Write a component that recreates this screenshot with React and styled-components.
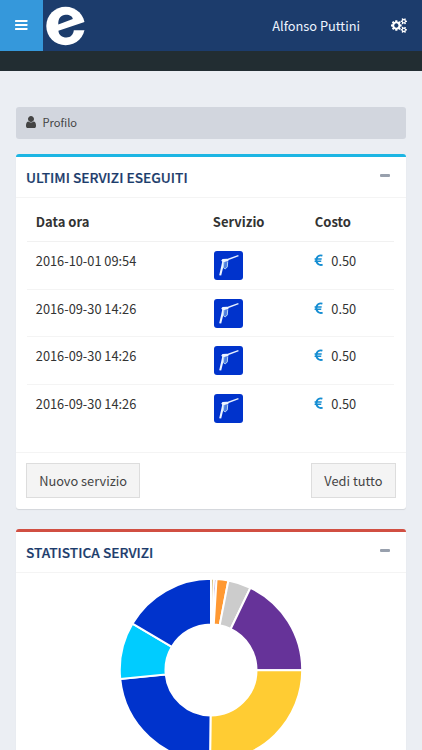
import React from "react";
import styled, { createGlobalStyle } from "styled-components";

const GlobalStyle = createGlobalStyle`
  * {
    box-sizing: border-box;
  }

  body {
    margin: 0;
    background: #ebeef3;
    color: #333;
    font-family: "Noto Sans CJK SC", "Open Sans", sans-serif;
    font-size: 12.8px;
    line-height: 20px;
    overflow: hidden;
  }
`;

const Page = styled.div`
  height: 750px;
  overflow: hidden;
`;

const Navbar = styled.header`
  display: flex;
  align-items: center;
  height: 51px;
  background: #1c3c6c;
  color: #fff;
`;

const MenuButton = styled.button`
  display: flex;
  align-items: center;
  justify-content: center;
  width: 43px;
  height: 51px;
  padding: 0 0 2px;
  border: 0;
  background: #3598db;
`;

const Logo = styled.svg`
  width: 40px;
  height: 40px;
  margin: 0 auto 0 3px;
`;

const UserName = styled.span`
  margin-right: 31px;
  color: #edf4ff;
`;

const SettingsIcon = styled.svg`
  width: 16px;
  height: 15px;
  margin-right: 15px;
`;

const DarkStrip = styled.div`
  height: 20px;
  background: #222d32;
`;

const Content = styled.main`
  display: flex;
  flex-direction: column;
  padding: 36px 15.6px 0;
`;

const Breadcrumb = styled.div`
  display: flex;
  align-items: center;
  gap: 5px;
  height: 31.6px;
  margin-bottom: 15px;
  padding: 0 0 2px 8px;
  border-radius: 3px;
  background: #d2d6de;
  color: #444;
  font-size: 11.1px;
`;

const Box = styled.section`
  height: ${(props) => props.$height}px;
  margin-bottom: 20px;
  border-top: 3px solid ${(props) => props.$accent};
  border-radius: 3px;
  background: #fff;
  box-shadow: 0 1px 1px rgba(0, 0, 0, 0.1);
`;

const BoxHeader = styled.div`
  display: flex;
  align-items: center;
  justify-content: space-between;
  height: 41px;
  padding: 0 16.4px 0 10.3px;
  border-bottom: 1px solid #f4f4f4;
`;

const BoxTitle = styled.h3`
  margin: 0;
  color: #1c3c6c;
  font-size: 13.7px;
  font-weight: 500;
  -webkit-text-stroke: 0.2px #1c3c6c;
`;

const Collapse = styled.span`
  width: 10px;
  height: 3px;
  margin-bottom: 3px;
  border-radius: 1px;
  background: #98a0ad;
`;

const BoxBody = styled.div`
  height: 254.8px;
  padding: 5px 12.5px 0 11px;
`;

const Table = styled.table`
  width: 100%;
  border-collapse: collapse;
  table-layout: fixed;
`;

const HeadCell = styled.th`
  width: ${(props) => props.$width};
  height: 39px;
  padding: 1px 9.2px 0;
  border-bottom: 1px solid #f1f1f1;
  font-size: 13px;
  font-weight: 700;
  text-align: left;
`;

const Cell = styled.td`
  height: 47.5px;
  padding: 9px 9.2px 0;
  vertical-align: top;
`;

const Row = styled.tr`
  & + & ${Cell} {
    border-top: 1px solid #f4f4f4;
  }
`;

const Price = styled.span`
  display: flex;
  align-items: center;
  gap: 4px;
  margin-left: -1.5px;
`;

const ServiceIcon = styled.svg`
  display: block;
  width: 29px;
  height: 29px;
  margin: 0 0 0 1px;
`;

const BoxFooter = styled.div`
  display: flex;
  justify-content: space-between;
  padding: 10px 10.5px;
  border-top: 1px solid #f4f4f4;
`;

const Button = styled.button`
  height: 35px;
  width: ${(props) => props.$width}px;
  padding: 0;
  border: 1px solid #ddd;
  background: #f4f4f4;
  color: #444;
  font: inherit;
`;

const ChartArea = styled.div`
  display: flex;
  justify-content: center;
  padding-top: 5.5px;
`;

const services = [
  { date: "2016-10-01 09:54", cost: "0.50" },
  { date: "2016-09-30 14:26", cost: "0.50" },
  { date: "2016-09-30 14:26", cost: "0.50" },
  { date: "2016-09-30 14:26", cost: "0.50" },
];

// start and end angle in degrees, clockwise from the top
const slices = [
  { from: 0, to: 1.9, color: "#d8c07c" },
  { from: 1.9, to: 3.5, color: "#7a3fa0" },
  { from: 3.5, to: 11, color: "#ff9933" },
  { from: 11, to: 25.6, color: "#cccccc" },
  { from: 25.6, to: 90.2, color: "#663399" },
  { from: 90.2, to: 180.6, color: "#ffcc33" },
  { from: 180.6, to: 264.4, color: "#0033cc" },
  { from: 264.4, to: 300.6, color: "#00ccff" },
  { from: 300.6, to: 360, color: "#0033cc" },
];

function slicePath(from, to) {
  const outer = 91.2;
  const inner = 45.5;
  const point = (r, deg) => {
    const a = (deg * Math.PI) / 180;
    return `${92 + r * Math.sin(a)} ${92 - r * Math.cos(a)}`;
  };
  return `M${point(outer, from)}A${outer} ${outer} 0 0 1 ${point(outer, to)}L${point(inner, to)}A${inner} ${inner} 0 0 0 ${point(inner, from)}Z`;
}

function Donut() {
  return (
    <svg width="184" height="184" viewBox="0 0 184 184">
      {slices.map((s) => (
        <path key={s.from} d={slicePath(s.from, s.to)} fill={s.color} stroke="#fff" strokeWidth="2" />
      ))}
    </svg>
  );
}

function BarsIcon() {
  return (
    <svg width="13" height="12" viewBox="0 0 13 12" fill="#fff">
      <rect y="1" width="12.5" height="2" rx="0.4" />
      <rect y="5" width="12.5" height="2" rx="0.4" />
      <rect y="9" width="12.5" height="2" rx="0.4" />
    </svg>
  );
}

function CogsIcon() {
  return (
    <SettingsIcon viewBox="0 0 1920 1792" fill="#fff">
      <path d="M896 896q0-106-75-181t-181-75-181 75-75 181 75 181 181 75 181-75 75-181zm768 512q0-52-38-90t-90-38-90 38-38 90q0 53 37.5 90.5t90.5 37.5 90.5-37.5 37.5-90.5zm0-1024q0-52-38-90t-90-38-90 38-38 90q0 53 37.5 90.5t90.5 37.5 90.5-37.5 37.5-90.5zm-384 421v185q0 10-7 19.5t-16 10.5l-155 24q-11 35-32 76 34 48 90 115 7 11 7 20 0 12-7 19-23 30-82.5 89.5t-78.5 59.5q-11 0-21-7l-115-90q-37 19-77 31-11 108-23 155-7 24-30 24h-186q-11 0-20-7.5t-10-17.5l-23-153q-34-10-75-31l-118 89q-7 7-20 7-11 0-21-8-144-133-144-160 0-9 7-19 10-14 41-53t47-61q-23-44-35-82l-152-24q-10-1-17-9.5t-7-19.5v-185q0-10 7-19.5t16-10.5l155-24q11-35 32-76-34-48-90-115-7-11-7-20 0-12 7-20 22-30 82-89t79-59q11 0 21 7l115 90q34-18 77-32 11-108 23-154 7-24 30-24h186q11 0 20 7.5t10 17.5l23 153q34 10 75 31l118-89q8-7 20-7 11 0 21 8 144 133 144 160 0 8-7 19-12 16-42 54t-45 60q23 48 34 82l152 23q10 2 17 10.5t7 19.5zm640 533v140q0 16-149 31-12 27-30 52 51 113 51 138 0 4-4 7-122 71-124 71-8 0-46-47t-52-68q-20 2-30 2t-30-2q-14 21-52 68t-46 47q-2 0-124-71-4-3-4-7 0-25 51-138-18-25-30-52-149-15-149-31v-140q0-16 149-31 13-29 30-52-51-113-51-138 0-4 4-7 4-2 35-20t59-34 30-16q8 0 46 46.5t52 67.5q20-2 30-2t30 2q51-71 92-112l6-2q4 0 124 70 4 3 4 7 0 25-51 138 17 23 30 52 149 15 149 31zm0-1024v140q0 16-149 31-12 27-30 52 51 113 51 138 0 4-4 7-122 71-124 71-8 0-46-47t-52-68q-20 2-30 2t-30-2q-14 21-52 68t-46 47q-2 0-124-71-4-3-4-7 0-25 51-138-18-25-30-52-149-15-149-31v-140q0-16 149-31 13-29 30-52-51-113-51-138 0-4 4-7 4-2 35-20t59-34 30-16q8 0 46 46.5t52 67.5q20-2 30-2t30 2q51-71 92-112l6-2q4 0 124 70 4 3 4 7 0 25-51 138 17 23 30 52 149 15 149 31z" />
    </SettingsIcon>
  );
}

function UserIcon() {
  return (
    <svg width="14" height="14" viewBox="0 0 1792 1792" fill="#444">
      <path d="M1536 1399q0 109-62.5 187t-150.5 78h-854q-88 0-150.5-78t-62.5-187q0-85 8.5-160.5t31.5-152 58.5-131 94-89 134.5-34.5q131 128 313 128t313-128q76 0 134.5 34.5t94 89 58.5 131 31.5 152 8.5 160.5zm-256-887q0 159-112.5 271.5t-271.5 112.5-271.5-112.5-112.5-271.5 112.5-271.5 271.5-112.5 271.5 112.5 112.5 271.5z" />
    </svg>
  );
}

function EuroIcon() {
  return (
    <svg width="14" height="14" viewBox="190 64 1728 1728" fill="#148dd2">
      <path d="M1360 1307l35 159q3 12-3 22.5t-17 14.5l-5 1q-4 2-10.5 3.5t-16 4.5-21.5 5.5-25.5 5-30 5-33.5 4.5-36.5 3-38.5 1q-234 0-409-130.5t-238-351.5h-95q-13 0-22.5-9.5t-9.5-22.5v-113q0-13 9.5-22.5t22.5-9.5h66q-2-57 1-105h-67q-14 0-23-9t-9-23v-114q0-14 9-23t23-9h98q67-210 243.5-338t400.5-128q102 0 194 23 11 3 20 15 6 11 3 24l-43 159q-3 13-14 19.5t-24 2.5l-4-1q-4-1-11.5-2.5l-17.5-3.5-22.5-3.5-26-3-29-2.5-29.5-1q-126 0-226 64t-150 176h468q16 0 25 12 10 12 7 26l-24 114q-5 26-32 26h-488q-3 37 0 105h459q15 0 25 12 9 12 6 27l-24 112q-2 11-11 18.5t-20 7.5h-387q48 117 149.5 185.5t228.5 68.5q18 0 36-1.5t33.5-3.5 29.5-4.5 24.5-5 18.5-4.5l12-3 5-2q13-5 26 2 12 7 15 21z" />
    </svg>
  );
}

// spray lance on a blue tile
function LanceIcon() {
  return (
    <ServiceIcon viewBox="0 0 29 29">
      <rect width="29" height="29" rx="3" fill="#0033cc" />
      <path d="M12.5 9L24.4 4.7" stroke="#e6f0ff" strokeWidth="1.4" />
      <path d="M7.3 9.6l1.2-1.5 4.500-.4 1.500 1-.2 1.600-3.700.8-1.200 4.300-2.200 9-2-.2 2.100-9.300.9-4.100z" fill="#eef6ff" />
      <path d="M9.9 11l-.6 5.600 2 1.300 2-2 .4-5.200" fill="#4f7fe0" stroke="#b5d6f6" strokeWidth="1" />
    </ServiceIcon>
  );
}

function BoxTop({ title }) {
  return (
    <BoxHeader>
      <BoxTitle>{title}</BoxTitle>
      <Collapse />
    </BoxHeader>
  );
}

function App() {
  return (
    <Page>
      <GlobalStyle />
      <Navbar>
        <MenuButton aria-label="Menu">
          <BarsIcon />
        </MenuButton>
        <Logo viewBox="0 0 40 40">
          <circle cx="19.6" cy="20" r="19.3" fill="#fff" />
          <path d="M12.3 18.4C12 12 15.5 8.6 20 8.8c4 0 6.5 1.7 6.8 4.3z" fill="#1c3c6c" />
          <path d="M12.4 24.7L40 15.4V24.3H27.8C27.3 29 24.5 31.5 20.5 31.5C16 31.5 12.8 29 12.4 24.7z" fill="#1c3c6c" />
        </Logo>
        <UserName>Alfonso Puttini</UserName>
        <CogsIcon />
      </Navbar>
      <DarkStrip />
      <Content>
        <Breadcrumb>
          <UserIcon />
          Profilo
        </Breadcrumb>
        <Box $accent="#1cb5e3" $height={355}>
          <BoxTop title="ULTIMI SERVIZI ESEGUITI" />
          <BoxBody>
            <Table>
              <thead>
                <tr>
                  <HeadCell $width="177px">Data ora</HeadCell>
                  <HeadCell $width="102px">Servizio</HeadCell>
                  <HeadCell>Costo</HeadCell>
                </tr>
              </thead>
              <tbody>
                {services.map((item, i) => (
                  <Row key={i}>
                    <Cell>{item.date}</Cell>
                    <Cell>
                      <LanceIcon />
                    </Cell>
                    <Cell>
                      <Price>
                        <EuroIcon />
                        {item.cost}
                      </Price>
                    </Cell>
                  </Row>
                ))}
              </tbody>
            </Table>
          </BoxBody>
          <BoxFooter>
            <Button $width={114}>Nuovo servizio</Button>
            <Button $width={85}>Vedi tutto</Button>
          </BoxFooter>
        </Box>
        <Box $accent="#d14f42" $height={300}>
          <BoxTop title="STATISTICA SERVIZI" />
          <ChartArea>
            <Donut />
          </ChartArea>
        </Box>
      </Content>
    </Page>
  );
}

export default App;
